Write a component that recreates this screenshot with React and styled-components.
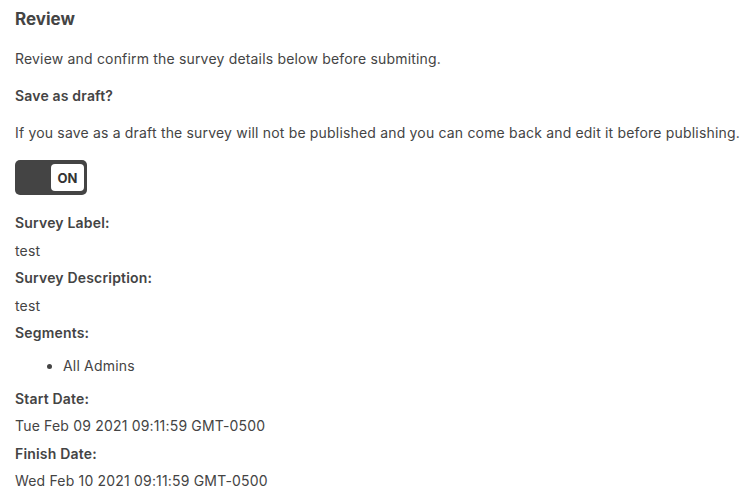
import styled, { createGlobalStyle } from "styled-components";

const Global = createGlobalStyle`
    body {
        margin: 0;
        background: #ffffff;
        font-family: Inter, "Noto Sans", sans-serif;
        color: #444444;
    }
`

const Page = styled.div`
    padding: 6px 0 0 15px;
`

const Title = styled.h2`
    margin: 0 0 8px 0;
    font-size: 17px;
    font-weight: 700;
    line-height: 26px;
    color: #444444;
`

const Text = styled.p`
    margin: 0;
    font-size: 14px;
    line-height: 37px;
    letter-spacing: 0.18px;
    white-space: nowrap;
    font-weight: ${(p) => (p.bold ? 600 : 400)};
    color: #444444;
`

const Toggle = styled.div`
    width: 72px;
    height: 35px;
    margin: 9px 0 14px 0;
    box-sizing: border-box;
    padding: 4px 3px;
    background: #444444;
    border-radius: 5px;
    display: flex;
    justify-content: flex-end;
`

const Knob = styled.div`
    width: 33px;
    height: 27px;
    background: #ffffff;
    border-radius: 4px;
    display: flex;
    align-items: center;
    justify-content: center;
    font-size: 13px;
    font-weight: 700;
    color: #333333;
`

const Field = styled.p`
    margin: 0;
    font-size: 14px;
    line-height: 27.5px;
    letter-spacing: 0.18px;
    font-weight: ${(p) => (p.bold ? 600 : 400)};
    color: #444444;
`

const List = styled.ul`
    margin: 0;
    padding: 3px 0 3px 48px;
    font-size: 14px;
    line-height: 32px;
    letter-spacing: 0.18px;
    color: #444444;
`

function App() {
    const details = [
        { label: "Survey Label:", value: "test" },
        { label: "Survey Description:", value: "test" },
    ]

    return (
        <>
            <Global />
            <Page>
                <Title>Review</Title>
                <Text>Review and confirm the survey details below before submiting.</Text>
                <Text bold>Save as draft?</Text>
                <Text>If you save as a draft the survey will not be published and you can come back and edit it before publishing.</Text>
                <Toggle>
                    <Knob>ON</Knob>
                </Toggle>
                {details.map((d, index) =>
                    <div key={index}>
                        <Field bold>{d.label}</Field>
                        <Field>{d.value}</Field>
                    </div>
                )}
                <Field bold>Segments:</Field>
                <List>
                    <li>All Admins</li>
                </List>
                <Field bold>Start Date:</Field>
                <Field>Tue Feb 09 2021 09:11:59 GMT-0500</Field>
                <Field bold>Finish Date:</Field>
                <Field>Wed Feb 10 2021 09:11:59 GMT-0500</Field>
            </Page>
        </>
    )
}

export default App
